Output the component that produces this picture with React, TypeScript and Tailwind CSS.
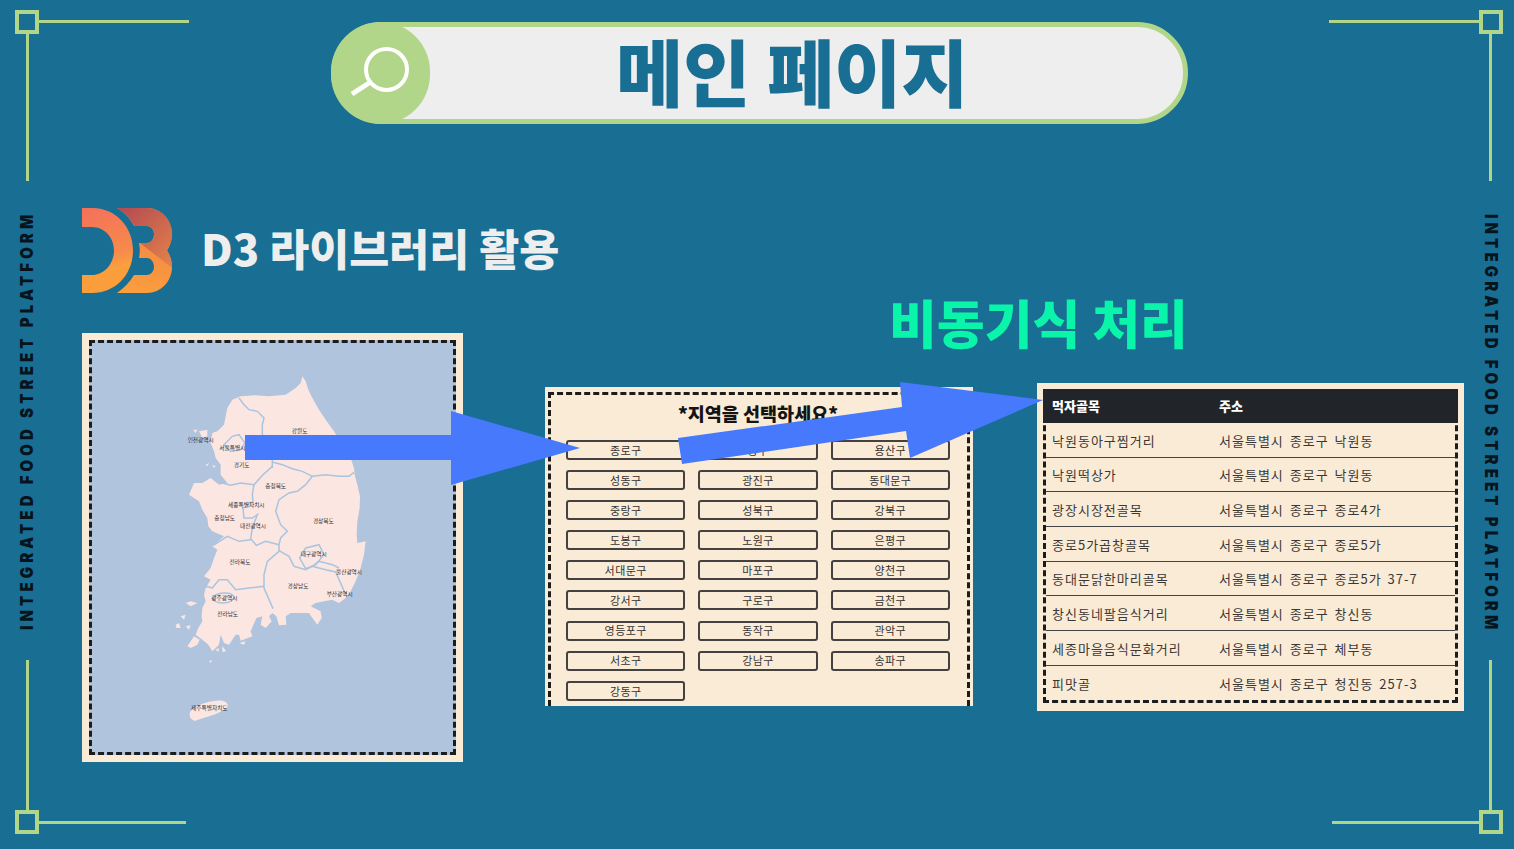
import React from 'react';

const cjk = 'font-["Noto_Sans_CJK_KR","Noto_Sans",sans-serif]';

const districts = [
  '종로구', '중구', '용산구', '성동구', '광진구', '동대문구', '중랑구', '성북구', '강북구',
  '도봉구', '노원구', '은평구', '서대문구', '마포구', '양천구', '강서구', '구로구', '금천구',
  '영등포구', '동작구', '관악구', '서초구', '강남구', '송파구', '강동구',
];

const streets = [
  ['낙원동아구찜거리', '서울특별시 종로구 낙원동'],
  ['낙원떡상가', '서울특별시 종로구 낙원동'],
  ['광장시장전골목', '서울특별시 종로구 종로4가'],
  ['종로5가곱창골목', '서울특별시 종로구 종로5가'],
  ['동대문닭한마리골목', '서울특별시 종로구 종로5가 37-7'],
  ['창신동네팔음식거리', '서울특별시 종로구 창신동'],
  ['세종마을음식문화거리', '서울특별시 종로구 체부동'],
  ['피맛골', '서울특별시 종로구 청진동 257-3'],
];

const mapLabels: [string, number, number][] = [
  ['강원도', 392, 196], ['인천광역시', 95, 222], ['서울특별시', 190, 245], ['경기도', 218, 298],
  ['충청북도', 320, 359], ['세종특별자치시', 232, 416], ['충청남도', 167, 456], ['대전광역시', 252, 479],
  ['경상북도', 463, 466], ['대구광역시', 434, 565], ['울산광역시', 540, 619], ['전라북도', 213, 588],
  ['경상남도', 387, 661], ['부산광역시', 512, 684], ['광주광역시', 166, 695], ['전라남도', 176, 745],
  ['제주특별자치도', 121, 1027],
];

const borders = [
  'M210 90L225 110L240 125L265 130L285 150L280 170L280 200L300 240L310 270L310 300',
  'M310 282L340 290L370 302L400 310L430 325L470 320L510 325L540 325L555 313',
  'M310 295L282 320L255 350L215 345L185 352L160 345',
  'M255 350L250 378L252 400L222 420L225 450L250 450L265 440L250 480L245 512L262 532L290 520L330 530',
  'M430 325L410 350L385 370L360 375L330 395L320 430L335 470L355 490L335 510L330 530',
  'M133 532L175 505L210 520L245 515',
  'M330 530L330 550L295 580L285 620L285 660L312 722',
  'M330 548L360 565L375 595L410 605L430 595L470 605L500 612L530 680',
  'M108 655L130 660L150 635L175 635L200 665L240 660L285 655',
  'M130 690C140 672 190 668 195 688C190 708 140 712 130 690Z',
  'M392 570L410 540L450 530L465 560L440 590L410 602Z',
  'M430 595L450 580L490 590L510 600',
  'M165 230L190 205L210 200L228 225L215 245L185 250Z',
];

function KoreaMap() {
  return (
    <svg viewBox="0 0 630 1080" className="w-[210px] h-[360px]">
      <path
        fill="#fbe6e2"
        d="M400 25L410 40L418 65L430 90L450 125L470 155L495 190L520 230L545 270L555 300L557 320L565 350L573 385L572 420L565 460L563 500L565 525L590 520L585 560L575 600L560 640L545 670L530 690L510 705L490 695L465 700L440 705L425 715L455 730L458 750L445 770L430 750L420 735L395 735L365 735L350 745L352 770L330 772L322 745L310 735L300 745L308 760L290 780L275 770L280 745L262 750L245 790L250 805L215 818L210 800L200 800L180 830L165 825L155 800L150 830L130 850L118 830L100 815L80 800L88 780L100 760L98 745L100 720L110 700L105 680L110 660L125 635L105 625L125 600L135 570L145 545L130 535L165 505L130 490L118 475L115 450L100 425L90 400L60 380L75 345L100 345L125 330L150 350L175 345L155 320L155 290L140 270L135 250L125 225L130 195L145 190L165 170L175 120L190 95L215 85L260 82L300 85L350 80L380 60L395 45Z"
      />
      <path fill="#fbe6e2" d="M55 835L75 805L92 815L85 830L65 840ZM90 190L115 185L115 205L100 210ZM72 185L85 185L80 195ZM110 290L120 285L115 295ZM130 290L140 295L135 300ZM50 705L65 700L85 705L65 715ZM35 745L50 740L45 755ZM20 770L30 765L35 780L22 780ZM50 775L65 772L60 785ZM120 880L130 875L125 885ZM210 825L230 820L225 830ZM140 845L150 840L148 852ZM160 835L172 850L160 852Z" />
      <path fill="#fbe6e2" d="M62 1040C62 1020 100 1005 130 1000C160 992 180 1002 176 1015C165 1035 110 1048 80 1058C70 1058 62 1050 62 1040Z" />
      <g fill="none" stroke="#a9c4e0" strokeWidth="4.5">
        {borders.map(d => <path key={d} d={d} />)}
      </g>
      <g fill="#33302f" fontSize="17" textAnchor="middle" fontFamily="Noto Sans CJK KR, sans-serif">
        {mapLabels.map(([name, x, y]) => <text key={name} x={x} y={y}>{name}</text>)}
      </g>
    </svg>
  );
}

function D3Logo() {
  const three =
    'M117 208H147C161 208 172 220 172 234C172 240 170 246 167 250.5C170 255 172 261 172 267C172 281 161 293 147 293H117C124 288 130 282 134 275H147C151 275 154 271 154 267C154 262 151 258 147 258H139C140 253 140 248 139 243H147C151 243 154 239 154 234C154 230 151 226 147 226H134C130 218 124 212 117 208Z';
  return (
    <svg viewBox="82 208 90 85" className="w-[90px] h-[85px] shrink-0">
      <defs>
        <linearGradient id="d3d" x1="82" y1="208" x2="110" y2="293" gradientUnits="userSpaceOnUse">
          <stop offset="0" stopColor="#f4705a" />
          <stop offset="0.6" stopColor="#f68a4c" />
          <stop offset="0.75" stopColor="#fb9f3c" />
          <stop offset="1" stopColor="#fa9d3b" />
        </linearGradient>
        <linearGradient id="d3top" x1="120" y1="208" x2="172" y2="260" gradientUnits="userSpaceOnUse">
          <stop offset="0" stopColor="#b44a52" />
          <stop offset="1" stopColor="#e07f4b" />
        </linearGradient>
        <linearGradient id="d3low" x1="140" y1="240" x2="130" y2="293" gradientUnits="userSpaceOnUse">
          <stop offset="0" stopColor="#f58a46" />
          <stop offset="1" stopColor="#fb9e3c" />
        </linearGradient>
        <clipPath id="d3clip">
          <polygon points="110,200 180,200 180,274 140,243 110,243" />
        </clipPath>
      </defs>
      <path fill="url(#d3d)" d="M82 208H92C116 208 133 227 133 250.5C133 274 116 293 92 293H82V275H92C105 275 114 263 114 250.5C114 238 105 227 92 227H82Z" />
      <path fill="url(#d3low)" d={three} />
      <path fill="url(#d3top)" d={three} clipPath="url(#d3clip)" />
    </svg>
  );
}

function Corner({ className, hLine, vLine }: { className: string; hLine: string; vLine: string }) {
  return (
    <>
      <div className={`absolute w-[24px] h-[24px] border-[4px] border-[#b1d689] ${className}`} />
      <div className={`absolute h-[3px] bg-[#b1d689] ${hLine}`} />
      <div className={`absolute w-[3px] bg-[#b1d689] ${vLine}`} />
    </>
  );
}

export default function App() {
  return (
    <div className={`relative w-[1514px] h-[849px] overflow-hidden bg-[#196e94] pt-[22px] ${cjk}`}>
      <Corner className="left-[15px] top-[10px]" hLine="left-[39px] top-[20px] w-[150px]" vLine="left-[26px] top-[34px] h-[147px]" />
      <Corner className="left-[1479px] top-[10px]" hLine="left-[1329px] top-[20px] w-[150px]" vLine="left-[1489px] top-[34px] h-[147px]" />
      <Corner className="left-[15px] top-[810px]" hLine="left-[39px] top-[821px] w-[147px]" vLine="left-[26px] top-[660px] h-[150px]" />
      <Corner className="left-[1479px] top-[810px]" hLine="left-[1332px] top-[821px] w-[147px]" vLine="left-[1489px] top-[660px] h-[150px]" />

      <div className='absolute left-[19px] top-[214px] h-[416px] leading-[16px] [writing-mode:vertical-rl] rotate-180 scale-x-[1.15] text-center font-["Inter",sans-serif] font-black text-[15px] tracking-[4.1px] whitespace-nowrap text-[#07141c]'>
        INTEGRATED FOOD STREET PLATFORM
      </div>
      <div className='absolute left-[1483px] top-[214px] h-[416px] leading-[16px] [writing-mode:vertical-rl] scale-x-[1.15] text-center font-["Inter",sans-serif] font-black text-[15px] tracking-[4.1px] whitespace-nowrap text-[#07141c]'>
        INTEGRATED FOOD STREET PLATFORM
      </div>

      {/* Title pill */}
      <div className="ml-[331px] w-[857px] h-[102px] rounded-[51px] border-[5px] border-[#b1d689] bg-[#eeeeee] flex items-center relative">
        <div className="absolute left-[-5px] top-[-5px] w-[99px] h-[102px] rounded-full bg-[#b1d689] flex items-center justify-center">
          <svg viewBox="0 0 99 102" className="w-[99px] h-[102px]" fill="none" stroke="#ffffff" strokeWidth="4">
            <circle cx="55.5" cy="47.5" r="20.5" />
            <path d="M38 61L21 72" strokeWidth="5" />
          </svg>
        </div>
        <span className="ml-[280px] -mt-[8px] text-[73px] leading-none font-black text-[#196e94] whitespace-nowrap">메인 페이지</span>
      </div>

      <div className="flex items-start mt-[84px] pl-[82px]">
        {/* Left column */}
        <div className="w-[381px] shrink-0">
          <div className="flex items-center h-[85px] gap-[29px] whitespace-nowrap">
            <D3Logo />
            <span className="-mt-[5px] text-[43.5px] leading-none font-black text-[#eeeeee]">D3 라이브러리 활용</span>
          </div>
          <div className="mt-[40px] h-[429px] bg-[#faebd7] p-[7px] pb-[7px]">
            <div className="h-full border-[3px] border-dashed border-[#1c1c1c] bg-[#b0c4de] pl-[77px] pt-[25px]">
              <KoreaMap />
            </div>
          </div>
        </div>

        {/* Right column */}
        <div className="ml-[82px] flex flex-col">
          <div className="pl-[344px] mt-[90px] h-[47px] flex items-center text-[52px] leading-none font-black text-[#0af5a9] whitespace-nowrap">
            비동기식 처리
          </div>
          <div className="flex items-start mt-[38px] gap-[64px]">
            <div className="w-[428px] h-[319px] mt-[4px] bg-[#faebd7] pt-[5px] px-[3px]">
              <div className="h-full border-[3px] border-b-0 border-dashed border-[#1c1c1c] pl-[15px] pr-[17px] overflow-hidden">
                <div className="h-[45px] pt-[4px] text-center text-[18.5px] leading-[28px] font-black text-[#141414] whitespace-nowrap">
                  *지역을 선택하세요*
                </div>
                <div className="grid grid-cols-3 gap-x-[13px] gap-y-[10.1px]">
                  {districts.map(name => (
                    <div
                      key={name}
                      className="h-[20px] rounded-[3px] border-2 border-[#454140] flex items-center justify-center text-[11px] tracking-[0.4px] text-[#333]"
                    >
                      {name}
                    </div>
                  ))}
                </div>
              </div>
            </div>

            <div className="w-[427px] h-[328px] bg-[#faebd7] pl-[6px] pr-[6px] pt-[6px] pb-[8px]">
              <div className="h-full border-[3px] border-dashed border-[#1c1c1c]">
                <div className="-mx-[3px] -mt-[3px] h-[34px] bg-[#212529] flex items-center text-[13px] font-black text-white">
                  <span className="w-[176px] pl-[9px] shrink-0">먹자골목</span>
                  <span>주소</span>
                </div>
                {streets.map(([name, addr], i) => (
                  <div
                    key={name}
                    className={`flex items-center h-[34.7px] pt-[1px] text-[13px] tracking-[1px] text-[#3a3836] whitespace-nowrap ${i < 7 ? 'border-b border-[#444]' : ''}`}
                  >
                    <span className="w-[173px] pl-[6px] shrink-0">{name}</span>
                    <span className="[word-spacing:2px]">{addr}</span>
                  </div>
                ))}
              </div>
            </div>
          </div>
        </div>
      </div>

      {/* Arrows over the panels */}
      <svg className="absolute left-0 top-0 w-[1514px] h-[849px] pointer-events-none" viewBox="0 0 1514 849">
        <polygon fill="#4679fb" points="245,435 451,435 451,411 580,448 451,485 451,460 245,460" />
        <polygon fill="#4679fb" points="678,438 902,407 900,382 1043,400 910,458 906,431 682,464" />
      </svg>
    </div>
  );
}
